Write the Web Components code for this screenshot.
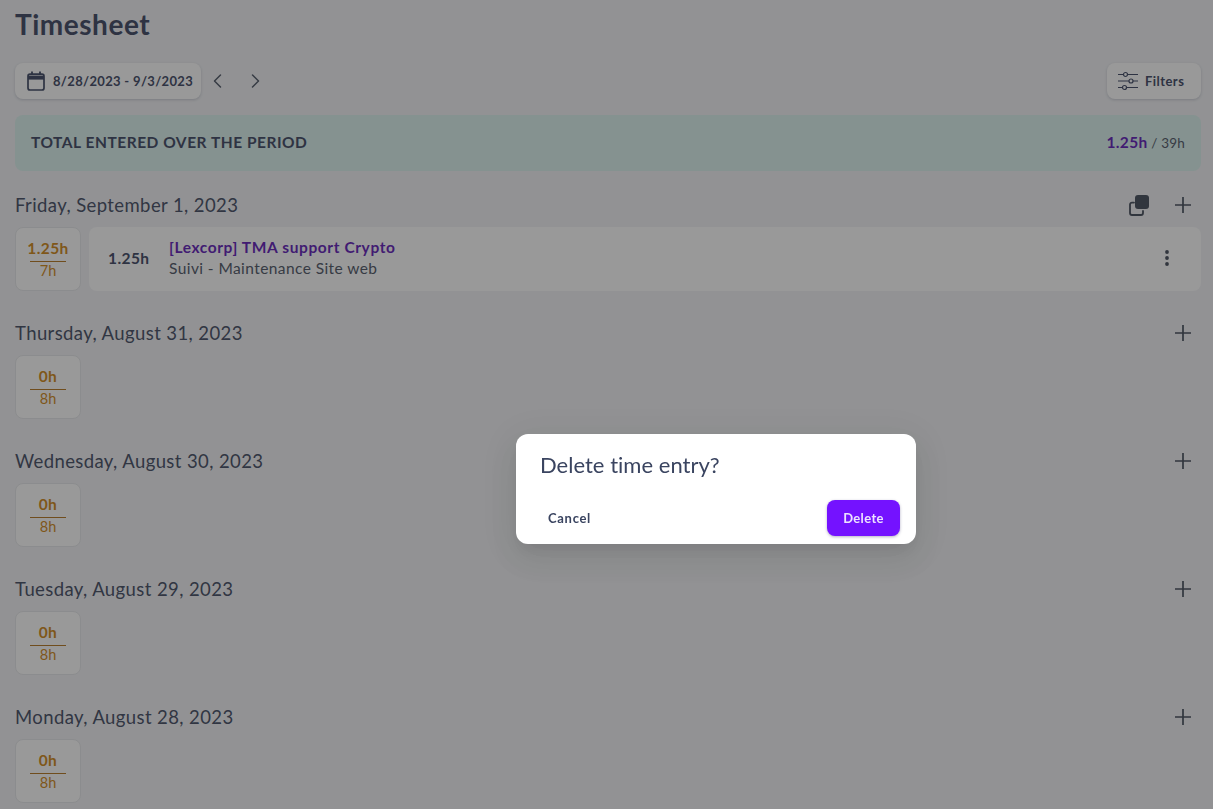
<!DOCTYPE html>
<html lang="en"><head><meta charset="utf-8"><title>Timesheet</title>
<style>
html,body{margin:0;height:100%;overflow:hidden}
body{background:#f2f3f6;color:#36405e;font-family:Lato,"Noto Sans",sans-serif}
</style></head>
<body>
<ts-page>
  <ts-toolbar range="8/28/2023 - 9/3/2023"></ts-toolbar>
  <ts-total entered="1.25h" target="39h">TOTAL ENTERED OVER THE PERIOD</ts-total>
  <ts-day label="Friday, September 1, 2023" done="1.25h" goal="7h" copy>
    <ts-entry hours="1.25h" project="[Lexcorp] TMA support Crypto" task="Suivi - Maintenance Site web"></ts-entry>
  </ts-day>
  <ts-day label="Thursday, August 31, 2023" done="0h" goal="8h"></ts-day>
  <ts-day label="Wednesday, August 30, 2023" done="0h" goal="8h"></ts-day>
  <ts-day label="Tuesday, August 29, 2023" done="0h" goal="8h"></ts-day>
  <ts-day label="Monday, August 28, 2023" done="0h" goal="8h"></ts-day>
</ts-page>
<ts-dialog heading="Delete time entry?" confirm="Delete" cancel="Cancel"></ts-dialog>
<script>
const esc=s=>String(s??'').replace(/[&<>"]/g,c=>({'&':'&amp;','<':'&lt;','>':'&gt;','"':'&quot;'}[c]));
class Base extends HTMLElement{
  connectedCallback(){ if(!this.shadowRoot){this.attachShadow({mode:'open'}).innerHTML=this.render();} }
  a(n){return esc(this.getAttribute(n));}
}
customElements.define('ts-page',class extends Base{render(){return `<style>
:host{display:block;padding:0 12px 0 15px}
h1{margin:0;height:50px;line-height:49px;font-size:28px;font-weight:700;letter-spacing:.52px;color:#3a4460}
</style><h1>Timesheet</h1><slot></slot>`}});
customElements.define('ts-toolbar',class extends Base{render(){return `<style>
:host{display:flex;align-items:center;margin-top:13px;height:36px}
button{all:unset;box-sizing:border-box;display:flex;align-items:center;height:36px;background:#fff;border-radius:8px;box-shadow:0 1px 3px rgba(40,50,80,.22);font:700 13px Lato,"Noto Sans",sans-serif;color:#3a4460}
.date{width:186px;padding-left:11px;gap:7px;letter-spacing:.33px}
.nav{display:flex;gap:17px;margin-left:7px}
.nav svg{display:block}
.sp{flex:1}
.filters{width:94px;padding-left:11px;gap:7px;letter-spacing:.45px}
svg{flex:none}
</style>
<button class="date"><svg width="20" height="20" viewBox="0 0 20 20" fill="none" stroke="#3a4460"><rect x="2" y="3.2" width="16" height="15.8" rx="2" stroke-width="1.7"/><path d="M2 6.6h16" stroke-width="4"/><path d="M6 .5v3.5M14 .5v3.5" stroke-width="1.8"/></svg><span>${this.a('range')}</span></button>
<div class="nav">
<svg width="20" height="20" viewBox="0 0 20 20" fill="none" stroke="#4a5263" stroke-width="1.5" stroke-linecap="round" stroke-linejoin="round"><path d="M12.5 4l-6 6 6 6"/></svg>
<svg width="20" height="20" viewBox="0 0 20 20" fill="none" stroke="#4a5263" stroke-width="1.5" stroke-linecap="round" stroke-linejoin="round"><path d="M7.5 4l6 6-6 6"/></svg>
</div><div class="sp"></div>
<button class="filters"><svg width="20" height="20" viewBox="0 0 20 20" fill="none" stroke="#3a4460" stroke-width="1.2"><path d="M0 3.5h5.5M9.5 3.5H20M0 10h11M15 10h5M0 16.5h4.5M8.5 16.5H20"/><circle cx="7.5" cy="3.5" r="2"/><circle cx="13" cy="10" r="2"/><circle cx="6.5" cy="16.5" r="2"/></svg><span>Filters</span></button>`}});
customElements.define('ts-total',class extends Base{render(){return `<style>
:host{display:flex;align-items:center;justify-content:space-between;box-sizing:border-box;height:56px;margin-top:16px;padding:0 16px 2px;background:#daf2ee;border-radius:8px;font-size:15.5px;font-weight:700;letter-spacing:.52px;color:#3a4460}
.r{font-size:13.5px;font-weight:400;color:#4a5263;letter-spacing:.2px}
b{font-size:15.5px;color:#5d17b8;letter-spacing:.35px}
</style><span><slot></slot></span><span class="r"><b>${this.a('entered')}</b> / ${this.a('target')}</span>`}});
customElements.define('ts-day',class extends Base{render(){const copy=this.hasAttribute('copy');return `<style>
:host{display:block;margin-top:20px;height:108px}
.h{display:flex;align-items:center;height:28px}
.t{flex:1;font-size:18.5px;letter-spacing:.4px;color:#3f4961;padding-bottom:1px}
.ic{display:flex;gap:20px;align-items:center;margin-right:6px}
svg{display:block}
.b{display:flex;gap:8px;margin-top:8px;height:64px}
.card{flex:none;box-sizing:border-box;width:66px;height:64px;background:#fff;border:1px solid #e6e7ea;border-radius:8px;display:flex;flex-direction:column;align-items:center;justify-content:center;color:#cf8614;font-size:15.5px;line-height:20px}
.d{font-weight:700;width:36px;text-align:center;border-bottom:1px solid #b3731a;padding-bottom:3px;margin-top:1px;display:flex;justify-content:center;white-space:nowrap;letter-spacing:.4px}
.g{font-size:14.5px;margin-top:-1px}
slot{display:block;flex:1}
</style>
<div class="h"><span class="t">${this.a('label')}</span><span class="ic">${copy?`<svg width="24" height="24" viewBox="0 0 24 24" fill="none"><path d="M7 9.6H5a2 2 0 0 0-2 2V20a2 2 0 0 0 2 2h9a2 2 0 0 0 2-2v-2" stroke="#404857" stroke-width="1.8" stroke-linecap="round"/><rect x="8" y="2" width="14" height="14" rx="3" fill="#404857"/></svg>`:''}<svg width="24" height="24" viewBox="0 0 24 24" fill="none" stroke="#404857" stroke-width="1.7"><path d="M12 4v16M4 12h16"/></svg></span></div>
<div class="b"><div class="card"><div class="d">${this.a('done')}</div><div class="g">${this.a('goal')}</div></div><slot></slot></div>`}});
customElements.define('ts-entry',class extends Base{render(){return `<style>
:host{display:flex;align-items:center;box-sizing:border-box;height:64px;background:#fff;border-radius:8px;padding:0 32px 0 19px;color:#3a4460}
.h{width:61px;font-size:15.5px;font-weight:700;letter-spacing:.42px;padding-bottom:2px}
.m{flex:1;display:flex;flex-direction:column;gap:1px;padding-bottom:3px}
.p{font-size:15.5px;line-height:20px;font-weight:700;color:#5d17b8;letter-spacing:.6px}
.s{font-size:15.5px;line-height:20px;color:#4a5263;letter-spacing:.42px}
svg{display:block;margin-bottom:2px}
</style><span class="h">${this.a('hours')}</span><div class="m"><span class="p">${this.a('project')}</span><span class="s">${this.a('task')}</span></div>
<svg width="4" height="16" viewBox="0 0 4 16" fill="#404857"><circle cx="2" cy="2" r="1.9"/><circle cx="2" cy="8" r="1.9"/><circle cx="2" cy="14" r="1.9"/></svg>`}});
customElements.define('ts-dialog',class extends Base{render(){return `<style>
:host{position:fixed;inset:0;box-sizing:border-box;padding:169px 0 0 219px;display:flex;align-items:center;justify-content:center;background:rgba(33,33,33,.46)}
.box{box-sizing:border-box;width:400px;height:110px;background:#fff;border-radius:12px;box-shadow:0 8px 14px -6px rgba(0,0,0,.1),0 16px 30px 2px rgba(0,0,0,.05),0 6px 36px 6px rgba(0,0,0,.05);padding:15px 16px 8px 24px;display:flex;flex-direction:column;justify-content:space-between;color:#3a4460}
h2{margin:0;font-size:22px;line-height:32px;font-weight:400;letter-spacing:.02px}
.a{display:flex;justify-content:space-between;align-items:center}
button{all:unset;box-sizing:border-box;height:36px;display:flex;align-items:center;justify-content:center;font:700 13px Lato,"Noto Sans",sans-serif;letter-spacing:.35px;border-radius:8px}
.c{padding:0 8px;color:#3a4460;letter-spacing:.7px}
.o{width:73px;background:#7412ff;color:#ece2ff;box-shadow:0 1px 3px rgba(40,30,90,.35)}
</style><div class="box"><h2>${this.a('heading')}</h2><div class="a"><button class="c">${this.a('cancel')}</button><button class="o">${this.a('confirm')}</button></div></div>`}});
</script>
</body></html>
